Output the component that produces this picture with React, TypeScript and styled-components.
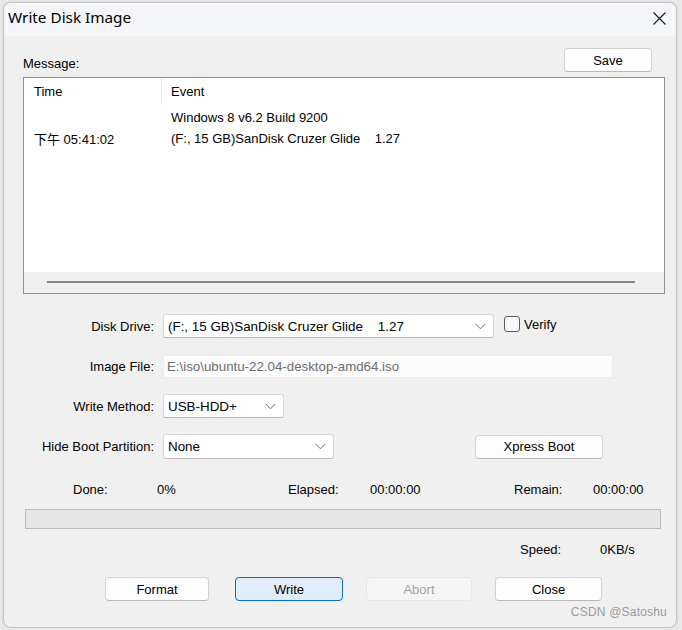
import React from "react";
import styled, { createGlobalStyle } from "styled-components";

const GlobalStyle = createGlobalStyle`
  html, body {
    margin: 0;
    padding: 0;
    background: #e9e9e9;
  }
  body {
    font-family: "Liberation Sans", Arial, sans-serif;
    font-size: 13px;
    color: #000;
  }
`;

const Window = styled.div`
  width: 672px;
  height: 624px;
  margin: 2px 0 0 3px;
  border: 1px solid #c4c4c4;
  border-radius: 8px;
  overflow: hidden;
  background: #f0f0f0;
  display: flex;
  flex-direction: column;
  box-shadow: 0 0 3px rgba(0, 0, 0, 0.12);
`;

const TitleBar = styled.div`
  height: 33px;
  flex: none;
  background: #f3f5f9;
  display: flex;
  align-items: center;
  justify-content: space-between;
  padding: 0 10px 0 4px;
`;

const Title = styled.div`
  font-family: "Noto Sans", "Open Sans", sans-serif;
  font-size: 15.3px;
  color: #000;
  margin-top: -5px;
`;

const Body = styled.div`
  flex: 1;
  display: flex;
  flex-direction: column;
  padding: 12px 11px 0 19px;
`;

const MessageHeader = styled.div`
  display: flex;
  align-items: flex-end;
  justify-content: space-between;
  height: 24px;
  padding-right: 13px;
`;

const Label = styled.span`
  line-height: 16px;
`;

const Button = styled.button<{ variant?: "default" | "primary" | "disabled"; w: number; lead?: number }>`
  width: ${({ w }) => w}px;
  height: 24px;
  margin-left: ${({ lead }) => lead ?? 0}px;
  font-family: "Liberation Sans", Arial, sans-serif;
  font-size: 13px;
  padding: 0;
  border-radius: 4px;
  background: ${({ variant }) =>
    variant === "primary" ? "#e0edf8" : variant === "disabled" ? "#f5f5f5" : "#fdfdfd"};
  border: 1px solid
    ${({ variant }) =>
      variant === "primary" ? "#0a6cc4" : variant === "disabled" ? "#e6e6e6" : "#d3d3d3"};
  border-bottom-color: ${({ variant }) =>
    variant === "primary" ? "#0a6cc4" : variant === "disabled" ? "#e6e6e6" : "#b8b8b8"};
  color: ${({ variant }) => (variant === "disabled" ? "#a3a3a3" : "#000")};
`;

const ListBox = styled.div`
  margin-top: 5px;
  width: 640px;
  height: 215px;
  border: 1px solid #8b9097;
  background: #fff;
  display: flex;
  flex-direction: column;
`;

const ListHeader = styled.div`
  display: grid;
  grid-template-columns: 138px 1fr;
  height: 27px;
  align-items: center;
`;

const HeaderCell = styled.div<{ sep?: boolean }>`
  padding-left: ${({ sep }) => (sep ? "9px" : "10px")};
  height: 100%;
  display: flex;
  align-items: center;
  border-right: ${({ sep }) => (sep ? "none" : "1px solid #e5e5e5")};
`;

const ListRows = styled.div`
  flex: 1;
  padding-top: 2px;
`;

const ListRow = styled.div`
  display: grid;
  grid-template-columns: 137px 1fr;
  height: 21px;
  align-items: center;
  padding-left: 10px;
`;

const Cell = styled.span`
  font-family: "Liberation Sans", "Noto Sans CJK SC", sans-serif;
  white-space: pre;
`;

const HScroll = styled.div`
  height: 21px;
  background: #f0f0f0;
  display: flex;
  align-items: center;
  padding: 0 29px 0 23px;
`;

const ScrollThumb = styled.div`
  flex: 1;
  height: 2px;
  background: #858585;
  margin-top: -2px;
`;

const Form = styled.div`
  margin-top: 20px;
  display: flex;
  flex-direction: column;
`;

const FormRow = styled.div<{ gap: number }>`
  display: flex;
  align-items: center;
  margin-top: ${({ gap }) => gap}px;
`;

const FieldLabel = styled.span`
  width: 131px;
  flex: none;
  text-align: right;
  margin-right: 9px;
`;

const Select = styled.div<{ w: number; h?: number }>`
  width: ${({ w }) => w}px;
  height: ${({ h }) => h ?? 24}px;
  box-sizing: border-box;
  background: #fff;
  border: 1px solid #d6d6d6;
  border-bottom-color: #b9b9b9;
  border-radius: 3px;
  display: flex;
  align-items: center;
  justify-content: space-between;
  padding: 0 7px 0 4px;
  font-size: 13.4px;
  white-space: pre;
`;

const TextField = styled.div`
  width: 450px;
  height: 23px;
  box-sizing: border-box;
  background: #fcfcfc;
  border: 1px solid #ececec;
  display: flex;
  align-items: center;
  padding-left: 3px;
  color: #6d6d6d;
  font-size: 13.3px;
`;

const CheckWrap = styled.label`
  display: flex;
  align-items: center;
  margin-left: 10px;
  margin-top: -4px;
  gap: 4px;
`;

const CheckBox = styled.span`
  width: 14px;
  height: 14px;
  border: 1px solid #5b5b5b;
  border-radius: 3px;
  background: #f7f7f7;
`;

const StatsGrid = styled.div<{ top: number }>`
  display: grid;
  grid-template-columns: 50px 84px 131px 82px 144px 79px 60px;
  margin-top: ${({ top }) => top}px;
  height: 16px;
  align-items: center;
`;

const StatCell = styled.span<{ shift?: number }>`
  margin-left: ${({ shift }) => shift ?? 0}px;
`;

const Progress = styled.div`
  margin-top: 12px;
  width: 636px;
  height: 20px;
  margin-left: 2px;
  box-sizing: border-box;
  background: #e6e6e6;
  border: 1px solid #bcbcbc;
`;

const ButtonRow = styled.div`
  display: flex;
  gap: 23px;
  padding-left: 82px;
  margin-top: 20px;
`;

const Watermark = styled.div`
  align-self: flex-end;
  margin-top: 4px;
  margin-right: -2px;
  font-size: 12px;
  color: #9b9b9b;
  letter-spacing: 0.2px;
`;

const Chevron = () => (
  <svg width="11" height="7" viewBox="0 0 11 7">
    <polyline points="0.5,0.8 5.5,5.8 10.5,0.8" fill="none" stroke="#6a6a6a" strokeWidth="1" />
  </svg>
);

const CloseIcon = () => (
  <svg width="13" height="13" viewBox="0 0 13 13" style={{ marginTop: -3 }}>
    <path d="M0.5 0.5 L12.5 12.5 M12.5 0.5 L0.5 12.5" stroke="#1a1a1a" strokeWidth="1.1" />
  </svg>
);

export default function App() {
  return (
    <>
      <GlobalStyle />
      <Window>
        <TitleBar>
          <Title>Write Disk Image</Title>
          <CloseIcon />
        </TitleBar>
        <Body>
          <MessageHeader>
            <Label>Message:</Label>
            <Button w={88}>Save</Button>
          </MessageHeader>
          <ListBox>
            <ListHeader>
              <HeaderCell>Time</HeaderCell>
              <HeaderCell sep>Event</HeaderCell>
            </ListHeader>
            <ListRows>
              <ListRow>
                <Cell />
                <Cell>Windows 8 v6.2 Build 9200</Cell>
              </ListRow>
              <ListRow>
                <Cell>下午 05:41:02</Cell>
                <Cell>(F:, 15 GB)SanDisk Cruzer Glide    1.27</Cell>
              </ListRow>
            </ListRows>
            <HScroll>
              <ScrollThumb />
            </HScroll>
          </ListBox>

          <Form>
            <FormRow gap={0}>
              <FieldLabel>Disk Drive:</FieldLabel>
              <Select w={331}>
                <span>(F:, 15 GB)SanDisk Cruzer Glide    1.27</span>
                <Chevron />
              </Select>
              <CheckWrap>
                <CheckBox />
                <span>Verify</span>
              </CheckWrap>
            </FormRow>
            <FormRow gap={17}>
              <FieldLabel>Image File:</FieldLabel>
              <TextField>E:\iso\ubuntu-22.04-desktop-amd64.iso</TextField>
            </FormRow>
            <FormRow gap={16}>
              <FieldLabel>Write Method:</FieldLabel>
              <Select w={121}>
                <span>USB-HDD+</span>
                <Chevron />
              </Select>
            </FormRow>
            <FormRow gap={16}>
              <FieldLabel>Hide Boot Partition:</FieldLabel>
              <Select w={171} h={25}>
                <span>None</span>
                <Chevron />
              </Select>
              <Button w={128} lead={141}>
                Xpress Boot
              </Button>
            </FormRow>
          </Form>

          <StatsGrid top={22}>
            <span />
            <StatCell>Done:</StatCell>
            <StatCell>0%</StatCell>
            <StatCell>Elapsed:</StatCell>
            <StatCell>00:00:00</StatCell>
            <StatCell>Remain:</StatCell>
            <StatCell>00:00:00</StatCell>
          </StatsGrid>

          <Progress />

          <StatsGrid top={12}>
            <span />
            <span />
            <span />
            <span />
            <span />
            <StatCell shift={6}>Speed:</StatCell>
            <StatCell shift={7}>0KB/s</StatCell>
          </StatsGrid>

          <ButtonRow>
            <Button w={104}>Format</Button>
            <Button w={108} lead={3} variant="primary">
              Write
            </Button>
            <Button w={106} variant="disabled">
              Abort
            </Button>
            <Button w={107}>Close</Button>
          </ButtonRow>
          <Watermark>CSDN @Satoshu</Watermark>
        </Body>
      </Window>
    </>
  );
}
